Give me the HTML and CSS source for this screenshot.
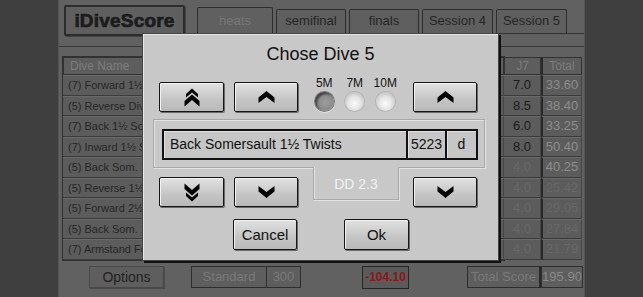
FILE: index.html
```html
<!DOCTYPE html>
<html>
<head>
<meta charset="utf-8">
<link rel="stylesheet" href="styles.css">
</head>
<body>
<div class="app">
  <div class="topbar">
    <div class="logo">iDiveScore</div>
    <div class="tabs">
      <div class="tab sel w76">heats</div>
      <div class="tab w70">semifinal</div>
      <div class="tab w70">finals</div>
      <div class="tab w71">Session 4</div>
      <div class="tab w71">Session 5</div>
    </div>
  </div>
  <div class="content">
    <div class="table">
      <div class="hd name"><span class="clip">Dive Name</span></div>
      <div class="hd"></div><div class="hd"></div><div class="hd"></div><div class="hd"></div><div class="hd"></div>
      <div class="hd">J7</div><div class="hd tot">Total</div>

      <div class="c name"><span class="clip">(7) Forward 1½ Somersaults Pike</span></div><div class="c"></div><div class="c"></div><div class="c"></div><div class="c"></div><div class="c"></div><div class="c dark">7.0</div><div class="c tot light">33.60</div>
      <div class="c name"><span class="clip">(5) Reverse Dive Pike</span></div><div class="c"></div><div class="c"></div><div class="c"></div><div class="c"></div><div class="c"></div><div class="c dark">8.5</div><div class="c tot light">38.40</div>
      <div class="c name"><span class="clip">(7) Back 1½ Somersaults Pike</span></div><div class="c"></div><div class="c"></div><div class="c"></div><div class="c"></div><div class="c"></div><div class="c dark">6.0</div><div class="c tot light">33.25</div>
      <div class="c name"><span class="clip">(7) Inward 1½ Somersaults Pike</span></div><div class="c"></div><div class="c"></div><div class="c"></div><div class="c"></div><div class="c"></div><div class="c dark">8.0</div><div class="c tot light">50.40</div>
      <div class="c name"><span class="clip">(5) Back Som. 1½ Twists</span></div><div class="c"></div><div class="c"></div><div class="c"></div><div class="c"></div><div class="c"></div><div class="c faded">4.0</div><div class="c tot light">40.25</div>
      <div class="c name"><span class="clip">(5) Reverse 1½ Som. ½ Twist</span></div><div class="c"></div><div class="c"></div><div class="c"></div><div class="c"></div><div class="c"></div><div class="c faded">4.0</div><div class="c tot faded">25.42</div>
      <div class="c name"><span class="clip">(5) Forward 2½ Som. Pike</span></div><div class="c"></div><div class="c"></div><div class="c"></div><div class="c"></div><div class="c"></div><div class="c faded">4.0</div><div class="c tot faded">29.05</div>
      <div class="c name"><span class="clip">(5) Back Som. 1½ Twists</span></div><div class="c"></div><div class="c"></div><div class="c"></div><div class="c"></div><div class="c"></div><div class="c faded">4.0</div><div class="c tot faded">27.84</div>
      <div class="c name"><span class="clip">(7) Armstand Forward Cut-through</span></div><div class="c"></div><div class="c"></div><div class="c"></div><div class="c"></div><div class="c"></div><div class="c faded">4.0</div><div class="c tot faded">21.79</div>
    </div>
    <div class="bottombar">
      <div class="box options">Options</div>
      <div class="group g-std"><div class="box std">Standard</div><div class="box num">300</div></div>
      <div class="box minus">-104.10</div>
      <div class="group g-tot"><div class="box tsl">Total Score</div><div class="box tsv">195.90</div></div>
    </div>
  </div>

  <div class="dialog">
    <div class="title">Chose Dive 5</div>
    <div class="row r1">
      <div class="btn b65"><svg width="16" height="19" viewBox="0 0 16 19"><path d="M2 6 L8 0.5 L14 6 L14 9.5 L8 4.5 L2 9.5Z M0.5 13 L8 6.5 L15.5 13 L15.5 18.5 L8 12 L0.5 18.5Z"/></svg></div>
      <div class="btn b64 ml10"><svg width="17" height="12" viewBox="0 0 17 12"><path d="M0.5 6.5 L8.5 0 L16.5 6.5 L16.5 12 L8.5 6 L0.5 12Z"/></svg></div>
      <div class="radios">
        <div class="ritem"><span class="rl">5M</span><span class="radio on"></span></div>
        <div class="ritem"><span class="rl">7M</span><span class="radio"></span></div>
        <div class="ritem"><span class="rl">10M</span><span class="radio"></span></div>
      </div>
      <div class="btn b64"><svg width="17" height="12" viewBox="0 0 17 12"><path d="M0.5 6.5 L8.5 0 L16.5 6.5 L16.5 12 L8.5 6 L0.5 12Z"/></svg></div>
    </div>
    <div class="panel">
      <div class="field">
        <div class="fname">Back Somersault 1½ Twists</div>
        <div class="fcode">5223</div>
        <div class="fpos">d</div>
      </div>
    </div>
    <div class="row r2">
      <div class="btn b65"><svg class="down" width="16" height="19" viewBox="0 0 16 19"><path d="M2 6 L8 0.5 L14 6 L14 9.5 L8 4.5 L2 9.5Z M0.5 13 L8 6.5 L15.5 13 L15.5 18.5 L8 12 L0.5 18.5Z"/></svg></div>
      <div class="btn b64 ml10"><svg class="down" width="17" height="12" viewBox="0 0 17 12"><path d="M0.5 6.5 L8.5 0 L16.5 6.5 L16.5 12 L8.5 6 L0.5 12Z"/></svg></div>
      <div class="ddtab">DD 2.3</div>
      <div class="btn b64 ml14"><svg class="down" width="17" height="12" viewBox="0 0 17 12"><path d="M0.5 6.5 L8.5 0 L16.5 6.5 L16.5 12 L8.5 6 L0.5 12Z"/></svg></div>
    </div>
    <div class="row r3">
      <div class="btn b64 txt">Cancel</div>
      <div class="btn b65 txt ok">Ok</div>
    </div>
  </div>
</div>
</body>
</html>
```
FILE: styles.css
```css
* { box-sizing: border-box; }
html, body { margin: 0; padding: 0; }
body {
  width: 643px;
  height: 297px;
  overflow: hidden;
  background: #3f3f3f;
  font-family: "Liberation Sans", Arial, sans-serif;
}
.app {
  position: relative;
  margin-left: 58px;
  width: 527px;
  height: 297px;
  background: #616161;
  border-left: 1px solid #555;
  border-right: 1px solid #555;
}
.topbar {
  display: flex;
  height: 47px;
  padding: 5px 0 0 5px;
  border-bottom: 1px solid #3a3a3a;
}
.logo {
  width: 121px;
  height: 31px;
  border: 2px solid #2c2c2c;
  border-radius: 2px;
  background: #5f5f5f;
  box-shadow: 1px 1px 0 #444;
  font-weight: bold;
  font-size: 19px;
  letter-spacing: 0.2px;
  color: #1c1c1c;
  text-align: center;
  line-height: 27px;
  -webkit-text-stroke: 0.7px #1c1c1c;
}
.tabs {
  flex: 1;
  display: flex;
  align-items: flex-end;
  gap: 3px;
  height: 29px;
  margin-left: 12px;
  border-bottom: 1px solid #333;
}
.tab {
  height: 24px;
  border: 1.5px solid #2e2e2e;
  border-bottom: none;
  border-radius: 2px 2px 0 0;
  background: #5f5f5f;
  font-size: 13px;
  color: #262626;
  text-align: center;
  line-height: 22px;
}
.tab.sel { height: 26px; color: #767676; line-height: 26px; background: #606060; }
.w76 { width: 76px; }
.w70 { width: 70px; }
.w71 { width: 71px; }

.content { padding: 9px 0 0 3px; }
.table {
  display: grid;
  grid-template-columns: 256px repeat(5, 37px) 37px 41px;
  grid-template-rows: 18px repeat(9, 20.5px);
  border: 1px solid #303030;
  width: 443px;
}
.hd {
  border: 1px solid #333;
  background: #5d5d5d;
  color: #7c7c7c;
  font-size: 12px;
  line-height: 16px;
  text-align: center;
}
.hd.name { text-align: left; padding-left: 6px; }
.clip { display: block; max-width: 82px; overflow: hidden; white-space: nowrap; }
.c {
  border-bottom: 1px solid #3b3b3b;
  border-top: 1px solid #6a6a6a;
  border-right: 1px solid #464646;
  background: #5c5c5c;
  font-size: 11px;
  line-height: 18px;
  color: #2a2a2a;
  text-align: center;
  white-space: nowrap;
  overflow: hidden;
}
.c.name { text-align: left; padding-left: 5px; color: #262626; }
.tot { border-left: 2px solid #2a2a2a; }
.dark { color: #1b1b1b; font-size: 13px; }
.faded { color: #686868; font-size: 13px; }
.light { color: #8d8d8d; font-size: 13px; }

.bottombar {
  display: flex;
  align-items: flex-start;
  margin-top: 5px;
  padding-left: 27px;
  height: 24px;
}
.box {
  height: 22px;
  border: 1px solid #2e2e2e;
  background: #5e5e5e;
  font-size: 13px;
  text-align: center;
  line-height: 20px;
  white-space: nowrap;
}
.group { display: flex; }
.options { width: 75px; color: #222; border-color: #484848; box-shadow: 1px 1px 0 #4a4a4a; font-size: 14px; }
.g-std { margin-left: 27px; }
.std { width: 75px; color: #7a7a7a; border-right: none; }
.num { width: 35px; color: #7a7a7a; }
.minus { margin-left: 61px; width: 47px; color: #8a1818; height: 23px; font-weight: bold; font-size: 12px; border-color: #262626; background: #5a5a5a; }
.g-tot { margin-left: 58px; }
.tsl { width: 74px; color: #7a7a7a; border-right: 2px solid #2a2a2a; font-size: 13px; }
.tsv { width: 42px; color: #8a8a8a; font-size: 13px; }

.dialog {
  position: absolute;
  left: 83px;
  top: 33px;
  width: 357px;
  height: 228px;
  background: #c8c8c8;
  border: 1px solid #444;
  box-shadow: 2px 2px 0 #111, inset 1px 1px 0 #e6e6e6;
}
.title {
  padding-top: 9px;
  font-size: 18px;
  line-height: 22px;
  text-align: center;
  color: #111;
}
.row { display: flex; align-items: flex-start; padding-left: 16px; }
.r1 { margin-top: 17px; height: 30px; }
.btn {
  height: 30px;
  display: flex;
  align-items: center;
  justify-content: center;
  border: 1.5px solid #161616;
  border-radius: 2px;
  background: linear-gradient(#e2e2e2, #c4c4c4 60%, #b9b9b9);
  box-shadow: 1px 1px 0 #6a6a6a, inset 1px 1px 0 #f2f2f2;
}
.btn svg { fill: #050505; display: block; }
.btn svg.down { transform: scaleY(-1); }
.b65 { width: 65px; }
.b64 { width: 64px; }
.ml10 { margin-left: 10px; }
.ml14 { margin-left: 14px; }
.radios {
  width: 115px;
  display: flex;
  padding-left: 11px;
  margin-top: -6px;
}
.ritem {
  width: 30.5px;
  display: flex;
  flex-direction: column;
  align-items: center;
}
.rl { font-size: 12px; line-height: 14px; color: #111; }
.radio {
  margin-top: 2px;
  width: 19px;
  height: 19px;
  border-radius: 50%;
  background: radial-gradient(circle at 50% 60%, #fafafa 0%, #e6e6e6 40%, #b0b0b0 100%);
  box-shadow: 0 0 0 1px #b4b4b4;
}
.radio.on {
  background: radial-gradient(circle at 55% 55%, #9c9c9c 0%, #8a8a8a 55%, #707070 100%);
  box-shadow: inset 2px 2px 2px #444, 0 0 0 1px #777, 0 1px 0 1px #e8e8e8;
}
.panel {
  margin: 7px 0 0 10px;
  width: 332px;
  height: 49px;
  border: 1px solid #a8a8a8;
  box-shadow: inset 1px 1px 0 #e2e2e2, 1px 1px 0 #e2e2e2;
  padding: 9px 0 0 8px;
}
.field {
  display: flex;
  width: 316px;
  height: 31px;
  border: 2px solid #111;
  background: #c6c6c6;
  font-size: 14px;
  color: #111;
  line-height: 27px;
}
.fname { flex: 1; padding-left: 6px; box-shadow: inset 1px 1px 0 #e0e0e0; }
.fcode { width: 39px; border-left: 2px solid #111; text-align: center; box-shadow: inset 1px 1px 0 #e0e0e0; }
.fpos { width: 31px; border-left: 2px solid #111; text-align: center; box-shadow: inset 1px 1px 0 #e0e0e0; }
.r2 { margin-top: 9px; height: 30px; }
.ddtab {
  margin-left: 15px;
  margin-top: -10px;
  width: 86px;
  height: 33px;
  border: 1px solid #a8a8a8;
  border-top: none;
  background: #c8c8c8;
  box-shadow: inset 1px 0 0 #e2e2e2, 1px 1px 0 #e2e2e2;
  color: #f2f2f2;
  font-size: 14px;
  text-align: center;
  line-height: 34px;
}
.r3 { margin-top: 12px; padding-left: 90px; }
.txt { height: 31px; font-size: 15px; color: #111; }
.ok { margin-left: 47px; }
```
